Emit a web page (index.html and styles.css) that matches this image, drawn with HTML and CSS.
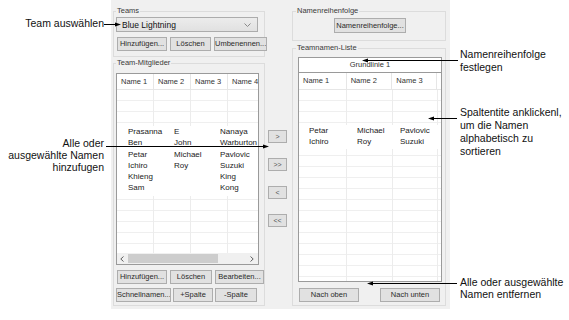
FILE: index.html
```html
<!DOCTYPE html>
<html lang="de">
<head>
<meta charset="UTF-8" />
<meta name="viewport" content="width=device-width, initial-scale=1" />
<title>Teams</title>
<link rel="stylesheet" href="styles.css">
</head>
<body>

<div class="page">
  <div class="notes notes-left">
    <p class="note note-team">Team auswählen</p>
    <p class="note note-add">Alle oder<br>ausgewählte Namen<br>hinzufugen</p>
  </div>

  <div class="dialog">
    <div class="col">
      <fieldset class="group group-teams">
        <legend>Teams</legend>
        <div class="select">
          <span>Blue Lightning</span>
          <svg width="7" height="4" viewBox="0 0 7 4"><path d="M0.5 0.5 3.5 3.5 6.5 0.5" fill="none" stroke="#8a8a8a" /></svg>
        </div>
        <div class="btn-row">
          <button class="btn w-50">Hinzufügen...</button>
          <button class="btn w-41">Löschen</button>
          <button class="btn w-53">Umbenennen...</button>
        </div>
      </fieldset>

      <fieldset class="group group-members">
        <legend>Team-Mitglieder</legend>
        <div class="list list-members">
          <div class="list-head">
            <span>Name 1</span><span>Name 2</span><span>Name 3</span><span>Name 4</span>
          </div>
          <div class="list-body">
            <div class="names">
              <span>Prasanna</span><span>E</span><span>Nanaya</span>
              <span>Ben</span><span>John</span><span>Warburton</span>
              <span>Petar</span><span>Michael</span><span>Pavlovic</span>
              <span>Ichiro</span><span>Roy</span><span>Suzuki</span>
              <span>Khieng</span><span></span><span>King</span>
              <span>Sam</span><span></span><span>Kong</span>
            </div>
          </div>
          <div class="hscroll">
            <svg width="4" height="6" viewBox="0 0 4 6"><path d="M3.5 0.5 0.8 3 3.5 5.5" fill="none" stroke="#606060" /></svg>
            <div class="thumb"></div>
            <svg width="4" height="6" viewBox="0 0 4 6"><path d="M0.5 0.5 3.2 3 0.5 5.5" fill="none" stroke="#606060" /></svg>
          </div>
        </div>
        <div class="btn-row">
          <button class="btn w-50">Hinzufügen...</button>
          <button class="btn w-42">Löschen</button>
          <button class="btn w-49">Bearbeiten...</button>
        </div>
        <div class="btn-row tight">
          <button class="btn w-55">Schnellnamen...</button>
          <button class="btn w-40">+Spalte</button>
          <button class="btn w-42">-Spalte</button>
        </div>
      </fieldset>
    </div>

    <div class="col col-mid">
      <button class="btn btn-move">&gt;</button>
      <button class="btn btn-move">&gt;&gt;</button>
      <button class="btn btn-move">&lt;</button>
      <button class="btn btn-move">&lt;&lt;</button>
    </div>

    <div class="col">
      <fieldset class="group group-order">
        <legend>Namenreihenfolge</legend>
        <div class="btn-row center">
          <button class="btn w-72 tall">Namenreihenfolge...</button>
        </div>
      </fieldset>

      <fieldset class="group group-list">
        <legend>Teamnamen-Liste</legend>
        <div class="list list-team">
          <div class="list-cap">Grundlinie 1</div>
          <div class="list-head">
            <span>Name 1</span><span>Name 2</span><span>Name 3</span><span></span>
          </div>
          <div class="list-body">
            <div class="names">
              <span>Petar</span><span>Michael</span><span>Pavlovic</span>
              <span>Ichiro</span><span>Roy</span><span>Suzuki</span>
            </div>
          </div>
        </div>
        <div class="btn-row spread">
          <button class="btn w-60">Nach oben</button>
          <button class="btn w-60">Nach unten</button>
        </div>
      </fieldset>
    </div>
  </div>

  <div class="notes notes-right">
    <p class="note note-order">Namenreihenfolge<br>festlegen</p>
    <p class="note note-sort">Spaltentite anklickenl,<br>um die Namen<br>alphabetisch zu<br>sortieren</p>
    <p class="note note-remove">Alle oder ausgewählte<br>Namen entfernen</p>
  </div>

  <!-- callout lines drawn over the dialog -->
  <svg class="callouts" width="569" height="320" viewBox="0 0 569 320">
    <g stroke="#000" stroke-width="1">
      <line x1="104" y1="24.5" x2="116" y2="24.5" />
      <line x1="106" y1="146.5" x2="264" y2="146.5" />
      <line x1="367" y1="60.5" x2="458" y2="60.5" />
      <line x1="433" y1="118.5" x2="457" y2="118.5" />
      <line x1="372" y1="283.5" x2="457" y2="283.5" />
    </g>
    <g fill="#000">
      <polygon points="121,24.5 115,22.5 115,26.5" />
      <polygon points="269,146.5 263,144.5 263,148.5" />
      <polygon points="362,60.5 368,58.5 368,62.5" />
      <polygon points="428,118.5 434,116.5 434,120.5" />
      <polygon points="367,283.5 373,281.5 373,285.5" />
    </g>
  </svg>
</div>

</body>
</html>
```

FILE: styles.css
```css
body {
  margin: 0;
  background: #fff;
  font-family: 'Liberation Sans', Arial, sans-serif;
  color: #111;
}
.page {
  position: relative;
  display: flex;
  width: 569px;
  height: 320px;
}

/* annotations */
.note {
  margin: 0;
  font-size: 10.5px;
  line-height: 13px;
  white-space: nowrap;
  color: #111;
}
.notes-left {
  width: 111px;
  flex-shrink: 0;
}
.notes-left .note {
  text-align: right;
  padding-right: 7px;
}
.note-team {
  margin-top: 17px;
}
.note-add {
  margin-top: 107px;
  line-height: 12px;
}
.notes-right {
  padding-left: 10px;
}
.note-order {
  margin-top: 48px;
}
.note-sort {
  margin-top: 32px;
}
.note-remove {
  margin-top: 118px;
  line-height: 12px;
}
.callouts {
  position: absolute;
  left: 0;
  top: 0;
  pointer-events: none;
}

/* dialog */
.dialog {
  width: 339px;
  height: 309px;
  flex-shrink: 0;
  box-sizing: border-box;
  padding: 6px 4px 0 2px;
  background: #f0f0f0;
  display: grid;
  grid-template-columns: 152px 27px 154px;
  align-items: start;
  font-size: 7.5px;
  color: #333;
}
.col {
  display: flex;
  flex-direction: column;
}
.group {
  margin: 0;
  min-width: 0;
  border: 1px solid #dcdcdc;
}
.group legend {
  padding: 0 1px;
  line-height: 10px;
  color: #3a3a3a;
}
.group-teams {
  padding: 1px 5px 5px 2px;
}
.group-members {
  margin-top: 1px;
  padding: 5px 5px 3px 2px;
}
.group-order {
  padding: 2px 3px 7px 5px;
}
.group-list {
  margin-top: 2px;
  padding: 4px 3px 3px 5px;
}
.group-order legend,
.group-list legend {
  margin-left: -2px;
}

.select {
  width: 142px;
  height: 15px;
  box-sizing: border-box;
  border: 1px solid #acacac;
  background: linear-gradient(#ececec, #e1e1e1);
  display: flex;
  align-items: center;
  justify-content: space-between;
  padding: 0 6px 0 5px;
  font-size: 8.5px;
  color: #111;
}

.btn-row {
  display: flex;
  gap: 3px;
  margin-top: 5px;
  padding-left: 1px;
}
.group-members .btn-row.tight {
  gap: 2px;
  margin-top: 4px;
  padding-left: 0;
}
.btn-row.center {
  justify-content: center;
  margin-top: 0;
  padding-left: 0;
}
.btn-row.spread {
  justify-content: space-between;
  margin-top: 6px;
  padding: 0 2px 0 1px;
}
.btn {
  flex-shrink: 0;
  box-sizing: border-box;
  height: 14px;
  padding: 0;
  border: 1px solid #adadad;
  background: #e1e1e1;
  font-family: inherit;
  font-size: 7.5px;
  line-height: 12px;
  color: #2a2a2a;
  white-space: nowrap;
  overflow: hidden;
}
.btn.tall {
  height: 15px;
}
.w-40 { width: 40px; }
.w-41 { width: 41px; }
.w-42 { width: 42px; }
.w-49 { width: 49px; }
.w-50 { width: 50px; }
.w-53 { width: 53px; }
.w-55 { width: 55px; }
.w-60 { width: 60px; }
.w-72 { width: 72px; }

.col-mid {
  gap: 15px;
  padding: 124px 0 0 3px;
}
.btn-move {
  width: 19px;
  height: 13px;
  font-size: 7px;
  line-height: 11px;
  color: #555;
}

/* list views */
.list {
  box-sizing: border-box;
  border: 1px solid #9a9a9a;
  background: #fff;
  display: flex;
  flex-direction: column;
}
.list-members {
  width: 143px;
  height: 192px;
}
.list-team {
  width: 144px;
  height: 225px;
}
.list-cap {
  height: 15px;
  box-sizing: border-box;
  border-bottom: 1px solid #9a9a9a;
  text-align: center;
  line-height: 14px;
}
.list-head {
  display: flex;
  height: 16px;
  flex-shrink: 0;
  box-sizing: border-box;
  border-bottom: 1px solid #e6e6e6;
}
.list-head span {
  box-sizing: border-box;
  border-right: 1px solid #e6e6e6;
  padding-left: 4px;
  line-height: 15px;
  white-space: nowrap;
  overflow: hidden;
  color: #333;
}
.list-members .list-head span {
  width: 37px;
}
.list-team .list-head span:nth-child(1) { width: 48px; }
.list-team .list-head span:nth-child(2) { width: 46px; }
.list-team .list-head span:nth-child(3) { width: 45px; }
.list-head span:last-child {
  flex: 1;
  border-right: none;
}
.list-team .list-head {
  height: 17px;
}

.list-body {
  flex: 1;
  background-image: repeating-linear-gradient(to bottom, transparent 0 10px, #efefef 10px 11px);
}
.list-members .list-body {
  background-image:
    linear-gradient(#ececec, #ececec), linear-gradient(#ececec, #ececec), linear-gradient(#ececec, #ececec),
    repeating-linear-gradient(to bottom, transparent 0 10px, #efefef 10px 11px);
  background-size: 1px 100%, 1px 100%, 1px 100%, auto;
  background-position: 36px 0, 73px 0, 110px 0, 0 0;
  background-repeat: no-repeat, no-repeat, no-repeat, repeat;
}
.list-team .list-body {
  background-image:
    linear-gradient(#ececec, #ececec), linear-gradient(#ececec, #ececec), linear-gradient(#ececec, #ececec),
    repeating-linear-gradient(to bottom, transparent 0 10px, #efefef 10px 11px);
  background-size: 1px 100%, 1px 100%, 1px 100%, auto;
  background-position: 47px 0, 93px 0, 138px 0, 0 0;
  background-repeat: no-repeat, no-repeat, no-repeat, repeat;
}
.names {
  display: grid;
  background: #fff;
  font-size: 8px;
  color: #222;
}
.list-members .names {
  grid-template-columns: 46px 46px auto;
  line-height: 11.3px;
  margin-top: 36px;
  padding: 0 0 2px 11px;
}
.list-team .names {
  grid-template-columns: 48px 43px auto;
  line-height: 11px;
  margin-top: 35px;
  padding: 0 0 2px 10px;
}

.hscroll {
  height: 11px;
  flex-shrink: 0;
  display: flex;
  align-items: center;
  padding: 0 4px 0 3px;
  background: #f0f0f0;
}
.thumb {
  width: 90px;
  height: 9px;
  margin: 0 auto 0 4px;
  background: #cdcdcd;
}
```
